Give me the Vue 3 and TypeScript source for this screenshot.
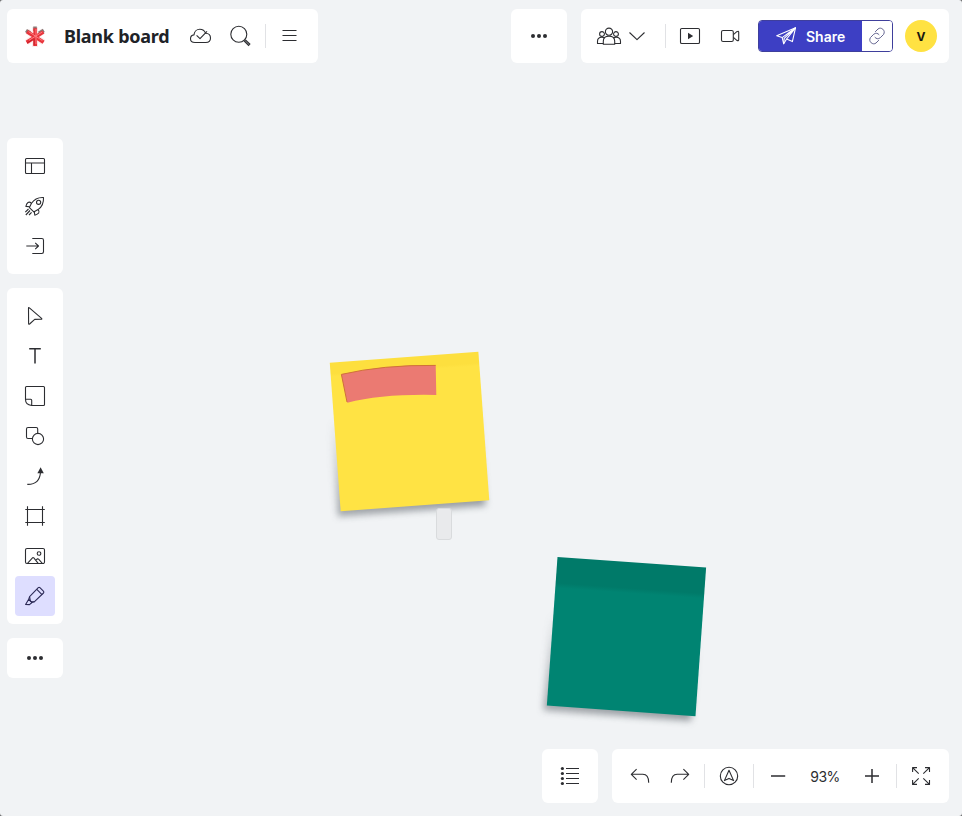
<script setup lang="ts">
import { defineComponent, h } from 'vue'

interface Stroke {
  d: string
  solid?: boolean
  width?: number
}

const ring = (x: number, y: number, r: number): string =>
  `M${x - r} ${y}a${r} ${r} 0 1 0 ${2 * r} 0a${r} ${r} 0 1 0 ${-2 * r} 0Z`

const box = (x: number, y: number, w: number, ht: number, r = 1): string =>
  `M${x + r} ${y}h${w - 2 * r}a${r} ${r} 0 0 1 ${r} ${r}v${ht - 2 * r}a${r} ${r} 0 0 1 ${-r} ${r}h${2 * r - w}a${r} ${r} 0 0 1 ${-r} ${-r}v${2 * r - ht}a${r} ${r} 0 0 1 ${r} ${-r}Z`

const icons: Record<string, Stroke[]> = {
  cloud: [
    { d: 'M15 26.5C12.2 26.5 10.5 24.8 10.5 22.7C10.5 20.6 11.9 19.2 14 18.9C14.2 15.6 16.7 13.2 19.8 13.2C22.6 13.2 24.7 14.8 25.6 17.2C28.4 17.3 30.5 19.2 30.5 21.9C30.5 24.6 28.5 26.5 25.8 26.5Z' },
    { d: 'M16.6 19.4L20 22.7L27 15.3' },
  ],
  search: [
    { d: ring(18.8, 18.2, 8) },
    { d: 'M24.6 24.2L29.6 29.1', width: 2.9 },
    { d: 'M25.2 24.8L29.2 28.7', width: 0.7, light: true } as Stroke,
  ],
  menu: [{ d: 'M13.5 14.5H27.5M13.5 19.5H27.5M13.5 24.5H27.5' }],
  dots: [
    { d: ring(14, 20, 2), solid: true },
    { d: ring(20, 20, 2), solid: true },
    { d: ring(26, 20, 2), solid: true },
  ],
  people: [
    { d: ring(20, 15.7, 3.6) },
    { d: ring(13, 18, 2.4) },
    { d: ring(27, 18, 2.4) },
    { d: 'M14.3 28.3V25.2C14.3 22 16.6 20.3 20 20.3S25.7 22 25.7 25.2V28.3Z' },
    { d: 'M14.3 27.5H8.5V25.4C8.5 22.5 10.3 21.3 12.8 21.3C14 21.3 14.9 21.5 15.6 22M25.7 27.5H31.5V25.4C31.5 22.5 29.7 21.3 27.2 21.3C26 21.3 25.1 21.5 24.4 22' },
    { d: 'M40.5 16.5L48 23.7L55.5 16.5' },
  ],
  present: [
    { d: box(10.5, 12.5, 19, 15, 1.3) },
    { d: 'M18 16.8L23.2 20L18 23.2Z', solid: true },
  ],
  video: [
    { d: box(11.5, 14.5, 11.8, 11, 1.6) },
    { d: 'M23.4 18.7L26.8 15.7Q28.7 14.5 28.7 16.2V23.8Q28.7 25.5 26.8 24.3L23.4 21.3' },
  ],
  template: [{ d: box(10.5, 12.5, 19, 15) + 'M10.5 17H29.5M16.5 17V27.5' }],
  rocket: [
    { d: 'M28.5 11.5C23 11.2 19 13.4 16.5 17.3L14.4 21.6L18.8 25.9L23 23.6C27 21 28.8 17 28.5 11.5Z' },
    { d: ring(23.6, 16.3, 2.1) },
    { d: 'M16.5 17.3C13.7 14.8 11.8 16.8 10.9 20.4L14.7 20.8M23 23.6C25.6 26.3 23.4 28.2 19.8 29.2L19.3 25.5' },
    { d: 'M13.5 23L10.3 26.2M15 24.5L10.8 29M16.6 26.3L14 29' },
  ],
  enter: [
    { d: 'M17.3 12.5H26.8Q28.5 12.5 28.5 14.2V25.8Q28.5 27.5 26.8 27.5H17.3' },
    { d: 'M11.3 20H23.5M20.2 16.8L23.5 20L20.2 23.2' },
  ],
  pointer: [{ d: 'M13.5 12Q13.5 11 14.4 11.8L26.6 22.3Q27.3 23.2 26.2 23.2L19.7 23.4L14.6 28Q13.6 28.6 13.6 27.5Z' }],
  text: [{ d: 'M14.2 12.8H25.8M20 12.8V27.4', width: 1.5 }],
  note: [{ d: 'M11.5 10.5H28.5Q29.5 10.5 29.5 11.5V28.5Q29.5 29.5 28.5 29.5H16.6Q10.5 28.7 10.5 23.5V11.5Q10.5 10.5 11.5 10.5ZM10.5 23.3H15.7Q16.7 23.3 16.7 24.3V29.4' }],
  shapes: [
    { d: 'M17.2 22.5H13Q11.5 22.5 11.5 21V13Q11.5 11.5 13 11.5H21.2Q22.7 11.5 22.7 13V17.3' },
    { d: ring(23, 23, 5.6) },
  ],
  arrow: [
    { d: 'M12.3 28.4C20 28.6 25 24.5 25.5 16' },
    { d: 'M25.6 11.2L28.8 17.3H22.4Z', solid: true },
  ],
  frame: [{ d: 'M12.5 10.3V29.7M27.5 10.3V29.7M10.3 13.5H29.8M10.3 26.5H29.8' }],
  image: [
    { d: box(10.5, 12.5, 19, 15, 1.5) },
    { d: ring(24, 17.5, 1.8) },
    { d: 'M12.5 27.3L17.7 21.7Q18.2 21.3 18.8 21.9L23.2 27.3M20.8 24.1L22.5 22.8Q23 22.5 23.6 23.2L27.3 27.3' },
  ],
  marker: [
    { d: 'M14.6 20.7L23.3 11.7Q24.1 11 24.9 11.7L28.6 15.4Q29.2 16.2 28.5 17L19.5 25.7L15.4 25.5Z' },
    { d: 'M21.8 13.4L27 18.6M14.6 20.7L13.7 23.2L17 26.5L19.5 25.7M13.7 23.2L10.6 28.5L14.5 28.6L17 26.5' },
  ],
  list: [
    ...[12.5, 17.5, 22.5, 27.5].map((y) => ({ d: ring(12.4, y, 1.6), solid: true })),
    { d: 'M16 12.5H29M16 17.5H29M16 22.5H29M16 27.5H29' },
  ],
  undo: [{ d: 'M16.6 13.1L11.3 18.3L16.6 23.6M11.3 18.3H22.8Q28.7 18.3 28.7 26.7' }],
  redo: [{ d: 'M23.4 13.1L28.7 18.3L23.4 23.6M28.7 18.3H17.2Q11.3 18.3 11.3 26.7' }],
  compass: [
    { d: ring(20, 20, 8.7) },
    { d: 'M20 14.3L24.6 24.6L20 22.4L15.4 24.6Z' },
  ],
  minus: [{ d: 'M13 20H27.2', width: 1.5 }],
  plus: [{ d: 'M13 20H27M20 13V27', width: 1.5 }],
  expand: [{ d: 'M17.7 17.7L11.6 11.6M11.6 16V11.6H16M22.3 17.7L28.5 11.6M24 11.6H28.5V16M17.7 22.3L11.6 28.4M11.6 24V28.4H16M22.3 22.3L28.5 28.4M24 28.4H28.5V24' }],
}

const Glyph = defineComponent({
  props: { name: { type: String, required: true }, wide: { type: Number, default: 40 } },
  setup(props) {
    return () =>
      h(
        'svg',
        { width: props.wide, height: 40, viewBox: `0 0 ${props.wide} 40`, fill: 'none', stroke: 'currentColor' },
        icons[props.name].map((s) =>
          h('path', {
            d: s.d,
            'stroke-width': s.width ?? 1.1,
            'stroke-linejoin': 'round',
            fill: s.solid ? 'currentColor' : 'none',
            ...(s.solid ? { stroke: 'none' } : {}),
            ...('light' in s ? { stroke: '#b4b5b8' } : {}),
          }),
        ),
      )
  },
})

const insertTools = ['template', 'rocket', 'enter']
const drawTools = ['pointer', 'text', 'note', 'shapes', 'arrow', 'frame', 'image', 'marker']
const activeTool = 'marker'
const zoomLevel = 93
</script>

<template>
  <div class="board">
    <div class="sticky yellow"></div>
    <div class="sticky teal"></div>
    <svg class="ink" width="100" height="44" viewBox="0 0 100 44">
      <path d="M3.3 12.3Q45 2.5 97.7 3.2L98.3 33Q45 31.8 9.3 40.7Z" fill="#eb7a72" />
      <path d="M9 40L3.4 12.4Q45 2.7 97.7 3.4" fill="none" stroke="#d0703a" stroke-width="1" />
    </svg>
    <div class="ghost"></div>

    <header class="bar">
      <div class="panel row file">
        <svg class="logo" width="40" height="40" viewBox="0 0 40 40" fill="none">
          <path d="M20 11V31M12 15.2L28.5 26.3M28 15.2L12 26.3" stroke="#fdeaea" stroke-width="6" />
          <path d="M20 10.4V15M11 14.4L15 17M28.8 14.4L24 17.4" stroke="#8b7876" stroke-width="3.6" />
          <path d="M20.2 12.3V30M12 15.6L28.6 26.2M28.4 16L11.6 26.4" stroke="#e8343b" stroke-width="3.7" />
          <path d="M21 13V28M13.5 15.6L27.4 24.6M27.4 15.9L14 24.3" stroke="#ff7b80" stroke-width="1" />
          <path d="M19 22.6V29.5M12 27L17.6 23.6" stroke="#c41b25" stroke-width="1" />
        </svg>
        <h1 class="title">Blank board</h1>
        <Glyph name="cloud" />
        <Glyph name="search" />
        <i class="rule"></i>
        <Glyph name="menu" />
      </div>
      <div class="panel row more"><Glyph name="dots" /></div>
      <div class="panel row collab">
        <Glyph name="people" :wide="60" />
        <i class="rule after-people"></i>
        <Glyph name="present" />
        <Glyph name="video" />
        <div class="share">
          <button class="share-main">
            <svg width="21" height="18" viewBox="0 0 21 18" fill="none" stroke="currentColor" stroke-width="1.1" stroke-linejoin="round">
              <path d="M.7 8.7L19.5.8L16.4 14.6L10.6 12L7.7 16.8L6.2 10.6Z" />
              <path d="M6.2 10.6L19.5.8L10.6 12M19.5.8L8.2 11.3L7.7 16.8" />
            </svg>
            <span>Share</span>
          </button>
          <button class="share-link" aria-label="Link">
            <svg width="20" height="20" viewBox="0 0 20 20" fill="none" stroke="currentColor" stroke-width="1" stroke-linecap="round">
              <path d="M8.4 5.6L11 3C14 .4 19 4.4 16.6 8.4L13.2 11.8C11.2 13.4 9.2 12.8 8 11.4" />
              <path d="M11.6 14.4L9 17C6 19.6 1 15.6 3.4 11.6L6.8 8.2C8.8 6.6 10.8 7.2 12 8.6" />
            </svg>
          </button>
        </div>
        <div class="avatar">V</div>
      </div>
    </header>

    <aside class="tools">
      <nav class="panel stack">
        <span v-for="t in insertTools" :key="t" class="tool"><Glyph :name="t" /></span>
      </nav>
      <nav class="panel stack">
        <span v-for="t in drawTools" :key="t" class="tool" :class="{ active: t === activeTool }"><Glyph :name="t" /></span>
      </nav>
      <nav class="panel stack compact">
        <span class="tool"><Glyph name="dots" /></span>
      </nav>
    </aside>

    <footer class="bar bottom">
      <div class="panel row list"><Glyph name="list" /></div>
      <div class="panel row view">
        <Glyph name="undo" />
        <Glyph name="redo" />
        <i class="rule"></i>
        <Glyph name="compass" />
        <i class="rule"></i>
        <Glyph name="minus" />
        <span class="zoom">{{ zoomLevel }}%</span>
        <Glyph name="plus" />
        <i class="rule"></i>
        <Glyph name="expand" />
      </div>
    </footer>
  </div>
</template>

<style>
body {
  background: #686a6c;
  overflow: hidden;
}
</style>

<style scoped>
.board {
  position: relative;
  box-sizing: border-box;
  width: 962px;
  height: 816px;
  padding: 9px 13px 13px 7px;
  display: flex;
  flex-direction: column;
  background: #f1f3f5;
  border-radius: 3px;
  overflow: hidden;
  color: #2c2d31;
  font-family: Inter, 'Liberation Sans', sans-serif;
}
.bar {
  display: flex;
  height: 54px;
  flex: none;
  gap: 14px;
}
.panel {
  box-sizing: border-box;
  background: #fff;
  border-radius: 6px;
  position: relative;
}
.row {
  display: flex;
  align-items: center;
  padding: 0 8px;
}
.row > svg,
.tool > svg {
  display: block;
  flex: none;
}
.file {
  width: 311px;
  margin-right: auto;
}
.title {
  margin: 0;
  padding-left: 9px;
  width: 116px;
  font: 700 18px/40px 'Noto Sans', sans-serif;
  letter-spacing: -0.25px;
  color: #202227;
  white-space: nowrap;
}
.rule {
  width: 1px;
  height: 24px;
  margin: 0 4px;
  flex: none;
  background: #e1e2e5;
}
.file .rule {
  margin-left: 5px;
  margin-right: 3px;
}
.collab {
  width: 368px;
}
.after-people {
  margin-left: 16px;
}
.share {
  display: flex;
  box-sizing: border-box;
  width: 135px;
  height: 32px;
  margin: 0 12px 0 8px;
  border: 1px solid #3f3f9c;
  border-radius: 4px;
  overflow: hidden;
  flex: none;
}
.share button {
  border: 0;
  padding: 0;
  display: flex;
  align-items: center;
}
.share .share-main {
  width: 103px;
  padding-left: 17px;
  gap: 9px;
  background: #3d3fc4;
  color: #fff;
  font: 600 14px/20px Inter, sans-serif;
}
.share-main span {
  padding-top: 1px;
}
.share .share-link {
  flex: 1;
  justify-content: center;
  background: #fff;
  color: #62638f;
}
.avatar {
  width: 32px;
  height: 32px;
  flex: none;
  border-radius: 50%;
  background: #ffe242;
  color: #17170f;
  text-align: center;
  font: 700 12px/33px Inter, sans-serif;
}
.tools {
  flex: 1;
  padding-top: 75px;
  display: flex;
  flex-direction: column;
  gap: 14px;
  width: 56px;
}
.stack {
  padding: 8px;
}
.compact {
  padding: 0 8px;
}
.tool {
  display: block;
  height: 40px;
  border-radius: 4px;
}
.tool.active {
  background: #dedeff;
  color: #2d2b58;
}
.bottom {
  justify-content: flex-end;
}
.zoom {
  width: 54px;
  text-align: center;
  font-size: 14px;
  letter-spacing: -0.5px;
}
.sticky {
  position: absolute;
  width: 148.5px;
  height: 148.5px;
}
.sticky::before {
  content: '';
  position: absolute;
  inset: 20px 4px -5px -3px;
  background: linear-gradient(175deg, transparent 25%, rgba(50, 58, 66, 0.5));
  filter: blur(3.5px);
}
.sticky::after {
  content: '';
  position: absolute;
  inset: 0;
}
.yellow {
  left: 335px;
  top: 357.3px;
  transform: rotate(-4.2deg);
}
.yellow::after {
  background: linear-gradient(#fddf3e 11px, #ffe344 14px);
}
.teal {
  left: 552.3px;
  top: 561.9px;
  transform: rotate(4.1deg);
}
.teal::after {
  background: linear-gradient(#007a69 26px, #008472 31px);
}
.ink {
  position: absolute;
  left: 338px;
  top: 362px;
}
.ghost {
  position: absolute;
  box-sizing: border-box;
  left: 436px;
  top: 508px;
  width: 16px;
  height: 32px;
  border: 1px solid #d9dbdd;
  border-radius: 3px;
  background: #e9eaec;
}
</style>
